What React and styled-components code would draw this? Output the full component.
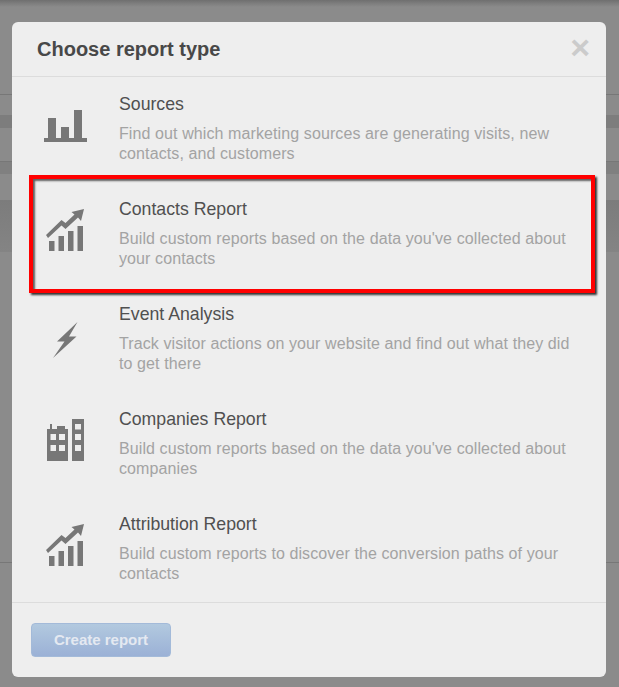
import React from "react";
import styled, { createGlobalStyle } from "styled-components";

const GlobalStyle = createGlobalStyle`
  html, body {
    margin: 0;
    padding: 0;
    height: 100%;
    background: #8b8b8b;
  }
  body {
    font-family: "Liberation Sans", Arial, sans-serif;
  }
`;

const REPORTS = [
  {
    title: "Sources",
    text: "Find out which marketing sources are generating visits, new contacts, and customers",
    icon: "bars",
    iconTop: 32,
  },
  {
    title: "Contacts Report",
    text: "Build custom reports based on the data you've collected about your contacts",
    icon: "trend",
    iconTop: 27,
    marked: true,
  },
  {
    title: "Event Analysis",
    text: "Track visitor actions on your website and find out what they did to get there",
    icon: "bolt",
    iconTop: 35,
  },
  {
    title: "Companies Report",
    text: "Build custom reports based on the data you've collected about companies",
    icon: "city",
    iconTop: 27,
  },
  {
    title: "Attribution Report",
    text: "Build custom reports to discover the conversion paths of your contacts",
    icon: "trend",
    iconTop: 27,
  },
];

const BarsIcon = () => (
  <svg width="43" height="33" viewBox="0 0 43 33" fill="#777">
    <rect x="0" y="29" width="43" height="4" />
    <rect x="4" y="9" width="8" height="21" />
    <rect x="17" y="18" width="8" height="12" />
    <rect x="30" y="1" width="8" height="29" />
  </svg>
);

const TrendIcon = () => (
  <svg width="39" height="42" viewBox="0 0 39 42" fill="#777">
    <path d="M0 26 L15.500 11 L19.500 14 L28.500 5.500 L25.500 3 L38 0 L35 12 L32 8.500 L19.500 20 L15.500 16.500 L2 29 Z" />
    <rect x="3" y="32" width="5.500" height="10" />
    <rect x="12.500" y="27" width="5.500" height="15" />
    <rect x="22" y="22" width="5.500" height="20" />
    <rect x="31.500" y="17" width="5.500" height="25" />
  </svg>
);

const BoltIcon = () => (
  <svg width="25" height="37" viewBox="0 0 25 37" fill="#777">
    <path d="M24.500 0 L4 19.500 L11.500 19.500 L0 36 L23.500 14.500 L16 14.500 Z" />
  </svg>
);

const CityIcon = () => (
  <svg width="37" height="42" viewBox="0 0 37 42">
    <path
      fill="#777"
      fillRule="evenodd"
      d="M0 10 H3 V5 H5 V10 H10 V7 H18 V10 H21 V42 H0 Z M25 0 H37 V42 H25 Z
         M3.500 15 V21 H9 V15 Z M12 15 V21 H18 V15 Z M3.500 26 V32 H9 V26 Z M12 26 V32 H18 V26 Z
         M28 5 V10.500 H34 V5 Z M28 15 V21 H34 V15 Z M28 26 V32 H34 V26 Z"
    />
  </svg>
);

const ICONS = {
  bars: <BarsIcon />,
  trend: <TrendIcon />,
  bolt: <BoltIcon />,
  city: <CityIcon />,
};

const App = () => {
  return (
    <Page>
      <GlobalStyle />
      <Modal>
        <Header>
          <Heading>Choose report type</Heading>
          <Close>×</Close>
        </Header>
        <List>
          {REPORTS.map(({ title, text, icon, iconTop, marked }) => (
            <Row key={title}>
              <IconBox $top={iconTop}>{ICONS[icon]}</IconBox>
              <Info>
                <Title>{title}</Title>
                <Text>{text}</Text>
              </Info>
              {marked && <Marker />}
            </Row>
          ))}
        </List>
        <Footer>
          <CreateButton disabled>Create report</CreateButton>
        </Footer>
      </Modal>
    </Page>
  );
};

export default App;

const Page = styled.div`
  height: 687px;
  box-sizing: border-box;
  padding: 22px 13px 10px 12px;
  overflow: hidden;
  background:
    linear-gradient(#6f6f6f, #7c7c7c 3px, transparent 7px) top / 100% 7px no-repeat,
    linear-gradient(#777, #777) 0 94px / 100% 1px no-repeat,
    linear-gradient(#7d7d7d, #7d7d7d) 0 115px / 100% 13px no-repeat,
    linear-gradient(#777, #777) 0 161px / 100% 1px no-repeat,
    linear-gradient(#808080, #808080) 0 161px / 100% 13px no-repeat,
    linear-gradient(#7c7c7c, #848484) 0 200px / 100% 52px no-repeat,
    linear-gradient(#777, #777) 0 562px / 100% 1px no-repeat,
    #8b8b8b;
`;

const Modal = styled.div`
  width: 594px;
  height: 655px;
  background: #eeeeee;
  border-radius: 6px;
  display: flex;
  flex-direction: column;
`;

const Header = styled.div`
  height: 55px;
  flex: none;
  box-sizing: border-box;
  padding: 0 16px 0 25px;
  border-bottom: 1px solid #dcdcdc;
  display: flex;
  align-items: center;
  justify-content: space-between;
`;

const Heading = styled.div`
  font-size: 20px;
  font-weight: 700;
  color: #484848;
`;

const Close = styled.div`
  margin-bottom: 4px;
  font-size: 34px;
  font-weight: 700;
  line-height: 1;
  color: #cbcbcb;
`;

const List = styled.div`
  flex: 1;
  display: flex;
  flex-direction: column;
`;

const Row = styled.div`
  height: 105px;
  flex: none;
  position: relative;
  display: flex;
  padding-left: 20px;
`;

const IconBox = styled.div`
  width: 67px;
  box-sizing: border-box;
  padding-top: ${(p) => p.$top}px;
  display: flex;
  align-items: flex-start;
  justify-content: center;
`;

const Info = styled.div`
  margin-left: 20px;
  padding-top: 16px;
  width: 465px;
`;

const Title = styled.div`
  font-size: 17.7px;
  line-height: 22px;
  color: #505050;
`;

const Text = styled.div`
  margin-top: 9px;
  font-size: 16px;
  line-height: 20px;
  letter-spacing: 0.1px;
  color: #a3a3a3;
`;

const Marker = styled.div`
  position: absolute;
  left: 17px;
  top: -7px;
  width: 566px;
  height: 118px;
  box-sizing: border-box;
  border: 4px solid #ff0000;
  box-shadow:
    2px 2px 2px #333,
    inset 2px 2px 2px rgba(0, 0, 0, 0.6);
`;

const Footer = styled.div`
  height: 75px;
  flex: none;
  box-sizing: border-box;
  border-top: 1px solid #dcdcdc;
  padding: 20px 19px;
`;

const CreateButton = styled.button`
  width: 140px;
  height: 34px;
  padding: 0 0 2px;
  border: 1px solid #a3bad9;
  border-radius: 4px;
  background: linear-gradient(#b2c9df, #9bb1d6);
  color: #e4e9f1;
  font-family: "Liberation Sans", Arial, sans-serif;
  font-size: 15px;
  font-weight: 700;
`;
